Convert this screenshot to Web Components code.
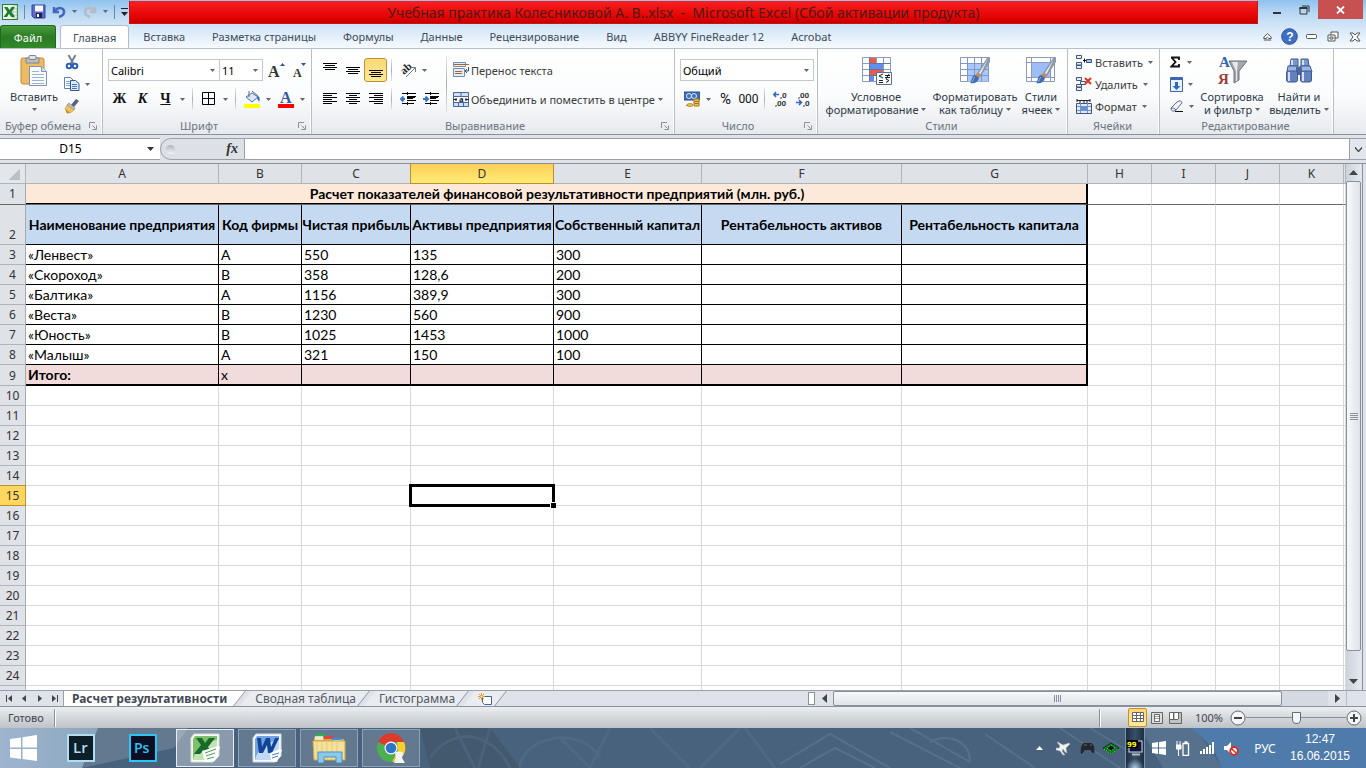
<!DOCTYPE html>
<html lang="ru">
<head>
<meta charset="utf-8">
<title>Учебная практика Колесниковой А. В..xlsx - Microsoft Excel</title>
<style>
html, body { margin: 0; height: 100%; }
body { font: 11px/13px "Noto Sans", "Open Sans", sans-serif; color: #3b3b3b; overflow: hidden; }
</style>
</head>
<body>
<xl-window></xl-window>
<script>
const RESET = `
*, *::before, *::after { box-sizing: border-box; }
button { font: inherit; color: inherit; background: none; border: 0; padding: 0; margin: 0; display: flex; align-items: center; justify-content: center; white-space: nowrap; }
input, select { font: inherit; color: inherit; border: 0; background: none; padding: 0; margin: 0; outline: 0; appearance: none; min-width: 0; }
`;
function define(name, css, html) {
  customElements.define(name, class extends HTMLElement {
    constructor() {
      super();
      this.attachShadow({ mode: 'open' });
    }
    connectedCallback() {
      if (this.shadowRoot.childNodes.length) return;
      const t = document.createElement('template');
      t.innerHTML = `<style>${RESET}${css}</style>${typeof html === 'function' ? html(this) : html}`;
      this.shadowRoot.append(t.content.cloneNode(true));
    }
  });
}

/* ---------- icons ---------- */
const lines = (rows, y0) => rows.map(([x, w], i) => `<path d="M${x} ${y0 + i * 2}.5h${w}" stroke="#000"/>`).join('');
const table4 = `<path fill="#fff" stroke="#8a9bbd" d="M.5.5h28v24H.5zM7.5.5v24M14.500.5v24M21.500.5v24M.5 6.500h28M.5 12.500h28M.5 18.500h28"/>`;
const brush = `<path d="M31 1l-3 1-10 15 4 3L31 6z" fill="#8d99a8"/><path d="M29 3l-9 14 1.500 1z" fill="#eef2f6"/><path d="M18 17l4 3-3 3-4-3z" fill="#c58a4c"/><path d="M16 19l4 3c-1 4-4 6-9 5 2-1 1-7 5-8z" fill="#3f6db3"/><path d="M16 21c-2 1-1 4-3 5" stroke="#8db4ea" fill="none"/>`;
const ICONS = {
  excel: [16, 16, `<rect x=".5" y=".5" width="15" height="15" fill="#e9f5e6" stroke="#2b7c3a"/><path d="M11 2h4v12h-4z" fill="#fff" stroke="#8cc08c" stroke-width=".7"/><path d="M11 5h4M11 8h4M11 11h4" stroke="#8cc08c"/><path d="M2 3h3.500l2 3 2-3H13L9.500 8l3.500 5H9.300L7 9.800 5 13H1.500L5.300 8z" fill="#1f7a33"/>`],
  save: [15, 15, `<path d="M1 1h13v13H3l-2-2z" fill="#5b6bc7" stroke="#3a4599"/><path d="M4 1.500h8v6H4z" fill="#f4f7ff"/><path d="M5 9h6v5H5z" fill="#1d2350"/><path d="M6 10h2v3H6z" fill="#fff"/>`],
  undo: [14, 16, `<path d="M2 3v5h5M3 7c3-4 9-4 9 1 0 3-2 4-5 5" fill="none" stroke="#3f67bd" stroke-width="2.500"/>`],
  redo: [14, 16, `<path d="M12 3v5H7M11 7C8 3 2 3 2 8c0 3 2 4 5 5" fill="none" stroke="#b5bac3" stroke-width="2.500"/>`],
  qat: [9, 10, `<path d="M1 1.500h7" stroke="#222"/><path d="M1 5h7L4.500 9z" fill="#222"/>`],
  arrow: [5, 3, `<path d="M0 0h5L2.500 3z" fill="#666"/>`],
  arrowb: [7, 4, `<path d="M0 0h7L3.500 4z" fill="#333"/>`],
  launcher: [8, 8, `<path d="M.5 6V.5H6M3.500 3.500l3 3M7.500 3.500v4h-4" fill="none" stroke="#8a8f98"/>`],
  paste: [28, 32, `<rect x="1" y="3" width="23" height="26" rx="2" fill="#eebb62" stroke="#c58a34"/><path d="M6 3h13v5H6z" fill="#b9bdc4" stroke="#7f858f"/><rect x="9" y=".5" width="7" height="4" rx="1" fill="#dfe2e6" stroke="#7f858f"/><path d="M9.500 11.500h12l5 5v14h-17z" fill="#f7fbff" stroke="#7d93b5"/><path d="M21.500 11.500v5h5" fill="#d5e2f3" stroke="#7d93b5"/><path d="M12 16.500h7M12 19.500h12M12 22.500h12M12 25.500h12M12 28.500h12" stroke="#9fb2d0"/>`],
  cut: [16, 16, `<path d="M4.500 1l5 9M11.500 1l-5 9" stroke="#6f7b8c" stroke-width="1.800"/><circle cx="5" cy="12" r="2.300" fill="none" stroke="#2f5fb4" stroke-width="2"/><circle cx="11" cy="12" r="2.300" fill="none" stroke="#2f5fb4" stroke-width="2"/>`],
  copy: [16, 16, `<path d="M.5 1.500h6l3 3v8h-9z" fill="#fff" stroke="#5d7fb8"/><path d="M2 5.500h5M2 7.500h5M2 9.500h5" stroke="#7ea0d6"/><path d="M6.500 4.500h5l3.500 3v7H6.500z" fill="#dce9fb" stroke="#2f5697"/><path d="M8 8.500h5M8 10.500h5M8 12.500h5" stroke="#4c79bd"/>`],
  painter: [16, 16, `<path d="M12 1l3 2-5 6-3-2z" fill="#59617a"/><path d="M5 5l6 5-1 2-7-5z" fill="#b8bec8" stroke="#7b828e" stroke-width=".6"/><path d="M3 7l7 5-4 3-5-4z" fill="#f2c457" stroke="#b98d2e" stroke-width=".6"/><path d="M1 11l5 4-3 .5z" fill="#c4831d"/>`],
  fontup: [18, 18, `<text x="1" y="16" font-family="Liberation Serif" font-weight="bold" font-size="16" fill="#333">A</text><path d="M13 5h5l-2.500-3z" fill="#2f5597"/>`],
  fontdn: [14, 18, `<text x="1" y="16" font-family="Liberation Serif" font-weight="bold" font-size="12" fill="#333">A</text><path d="M9 2h5l-2.500 3z" fill="#2f5597"/>`],
  border: [14, 14, `<path d="M.5.500h12v12H.5zM6.500.5v12M.5 6.500h12" fill="none" stroke="#000"/>`],
  fill: [18, 18, `<path d="M3 7l6-4 6 4-6 5z" fill="#dbe7f7" stroke="#4470ab"/><path d="M6 1v6M9 1l6 5" stroke="#5c6675" fill="none"/><path d="M15 6c2 1 2 4 1 6l-2-4z" fill="#2f5fb4"/><path d="M1 14h16v4H1z" fill="#ff0"/>`],
  color: [18, 18, `<text x="3" y="13" font-family="Liberation Serif" font-weight="bold" font-size="16" fill="#31579c">A</text><path d="M1 14h16v4H1z" fill="#f00"/>`],
  atop: [14, 16, lines([[0, 14], [2, 10], [0, 14], [2, 10]], 1)],
  amid: [14, 16, lines([[0, 14], [2, 10], [0, 14], [2, 10]], 5)],
  abot: [14, 16, lines([[0, 14], [2, 10], [0, 14], [2, 10]], 8)],
  left: [14, 14, lines([[0, 14], [0, 9], [0, 14], [0, 9], [0, 14], [0, 9]], 1)],
  center: [14, 14, lines([[0, 14], [3, 8], [0, 14], [3, 8], [0, 14], [3, 8]], 1)],
  right: [14, 14, lines([[0, 14], [5, 9], [0, 14], [5, 9], [0, 14], [5, 9]], 1)],
  orient: [18, 18, `<text transform="translate(5 14) rotate(-42)" x="0" y="0" font-family="Liberation Serif" font-weight="bold" font-size="11" fill="#222">ab</text><path d="M7 16l9-9M16.500 11V6.500H12" stroke="#777" fill="none"/>`],
  outdent: [16, 14, `<path d="M5 7H1M3.500 4.500L1 7l2.500 2.500" stroke="#3c74c8" stroke-width="2" fill="none"/><path d="M2 1.500h14M7 4.500h9M7 6.500h6M7 8.500h9M2 11.500h12" stroke="#000"/><path d="M7 5.500h8" stroke="#000"/><path d="M7.500 0v14" stroke="#000" stroke-dasharray="1 1"/>`],
  indent: [16, 14, `<path d="M0 7h5M2.500 4.500L5 7 2.500 9.500" stroke="#3c74c8" stroke-width="2" fill="none"/><path d="M2 1.500h14M7 4.500h9M7 6.500h6M7 8.500h9M2 11.500h12" stroke="#000"/><path d="M7 5.500h8" stroke="#000"/><path d="M7.500 0v14" stroke="#000" stroke-dasharray="1 1"/>`],
  wrap: [16, 16, `<path d="M.5.5h12v4H.5zM.5 6.500h11v8H.5z" fill="#e3edf9" stroke="#6f8cba"/><path d="M1 2.500h15" stroke="#b0622b"/><path d="M2 9.500h7M2 11.500h7" stroke="#b0622b"/><path d="M15.500 5v4h-3M14 7l-2 2 2 2" stroke="#2f4f86" fill="none"/>`],
  merge: [16, 15, `<path d="M.5.500h15v14H.5z" fill="#cfdff4" stroke="#48699f"/><path d="M1 4.500h14M1 10.500h14M8 1v3M5.500 11v3M10.500 11v3" stroke="#48699f"/><path d="M1 5h14v5H1z" fill="#fff"/><path d="M0 7.500h4M12 7.500h4M3 6v3M13 6v3" stroke="#223"/><text x="6" y="10" font-family="Liberation Serif" font-weight="bold" font-size="9" fill="#112">a</text>`],
  currency: [16, 16, `<path d="M0 1h16v8H0z" fill="#3e6fb8" stroke="#27508f"/><circle cx="5" cy="5" r="2.500" fill="none" stroke="#dce8fa"/><circle cx="10" cy="5" r="2.500" fill="none" stroke="#dce8fa"/><path d="M10 8h5v7h-5z" fill="#f0c24a" stroke="#a9781c"/><path d="M10 10.500h5M10 12.500h5M2 14.500h7" stroke="#a9781c"/><ellipse cx="6" cy="14" rx="3" ry="1.500" fill="#f0c24a" stroke="#a9781c" stroke-width=".7"/>`],
  incdec: [16, 16, `<path d="M6 3.500H1M3 1L.8 3.500 3 6" stroke="#2f66c0" stroke-width="1.500" fill="none"/><text x="7" y="7" font-family="Roboto" font-size="8" font-weight="bold" fill="#333">,0</text><text x="2" y="15" font-family="Roboto" font-size="8" font-weight="bold" fill="#333">,00</text>`],
  decdec: [16, 16, `<text x="2" y="7" font-family="Roboto" font-size="8" font-weight="bold" fill="#333">,00</text><path d="M0 11.500h5M3 9l2.500 2.500L3 14" stroke="#2f66c0" stroke-width="1.500" fill="none"/><text x="7" y="15" font-family="Roboto" font-size="8" font-weight="bold" fill="#333">,0</text>`],
  cond: [32, 32, `<g transform="translate(2 2)">${table4}<path d="M7 1h7v5H7zM7 13h14v5H7z" fill="#ec5a45"/><path d="M7 7h14v5H7zM7 19h5v5H7z" fill="#5f8ff0"/><path d="M7.500.5v24M7.500 6.500h21M7.500 12.500h14M7.500 18.500h14" stroke="#6274a0"/></g><path d="M16.500 17.500h15v12h-15z" fill="#f7f9fc" stroke="#5a6f92"/><path d="M23 19l-4 2 4 2M19 25.500h4M19 27.500h4M25 20.500h5M25 22.500h5M29 19l-3 5M26 24l3 1.500-3 2" stroke="#222" fill="none"/>`],
  fmttable: [32, 32, `<g transform="translate(1 2)">${table4}<path d="M7.500 6.500h21v18h-21z" fill="#a9c8fb"/><path d="M7.500.5v24M14.500.5v24M21.500.5v24M.5 6.500h28M.5 12.500h28M.5 18.500h28M28.500.5v24" stroke="#7f96c6"/></g><g transform="translate(0 1)">${brush}</g>`],
  cellstyle: [32, 32, `<g transform="translate(1 2)"><path fill="#fff" stroke="#8a9bbd" d="M.5.500h28v24H.5zM5.500.5v24M24.500.5v24M.5 5.500h28M.5 20.500h28"/><path d="M6 6h18v14H6z" fill="#9cbdf7"/></g><g transform="translate(0 1)">${brush}</g>`],
  cins: [16, 14, `<path d="M.5.500h5v3h-5zM.5 7.500h5v2.500h-5zM.5 10.500h5v3h-5z" fill="#e8f0fb" stroke="#40557d"/><path d="M7 5.500h4M8.500 3.500v4" stroke="#111"/><path d="M10.500 4.500h5v3h-5z" fill="#a9c6f2" stroke="#2f4f86"/>`],
  cdel: [16, 14, `<path d="M.5.500h5v3h-5zM.5 7.500h5v2.500h-5zM.5 10.500h5v3h-5zM4.500 4.500h5v3h-5z" fill="#e8f0fb" stroke="#40557d"/><path d="M9 1l6 6M15 1L9 7" stroke="#e1341e" stroke-width="2"/>`],
  cfmt: [16, 16, `<path d="M1 1v3M1 2.500h13M14 1v3M4 2v3M8 2v3M11 2v3" stroke="#223"/><path d="M.5 5.500h15v10H.5z" fill="#dfeafa" stroke="#40557d"/><path d="M4.500 5v10M11.500 5v10M1 8.500h14M1 12.500h14" stroke="#7591c0"/><path d="M5 9h6v3H5z" fill="#5c8fe6"/>`],
  sum: [12, 12, `<path d="M1 1.500h8v2.500M9 8v2.500H1.500L5.500 6 1.500 1.500" fill="none" stroke="#111" stroke-width="1.800"/>`],
  filldn: [13, 15, `<path d="M.5.5h12v14H.5z" fill="#e9f1fc" stroke="#3c66ad"/><path d="M1 1h11v2H1z" fill="#3c66ad"/><path d="M5 5h3v4h2.500l-4 4-4-4H5z" fill="#2d66c4"/>`],
  erase: [14, 13, `<path d="M1 8l6-6c3-2 5-1 5 1l-6 7c-3 2-5 1-5-2z" fill="#eef3fb" stroke="#5b6b87"/><path d="M1 8c1 0 4 0 5 2" stroke="#5b6b87" fill="none"/><path d="M5 11.500h8" stroke="#111"/>`],
  sort: [32, 32, `<text x="3" y="12" font-family="Liberation Serif" font-weight="bold" font-size="15" fill="#3465b4">A</text><text x="2" y="29" font-family="Liberation Serif" font-weight="bold" font-size="15" fill="#a23a35">Я</text><path d="M13 6h18l-8 10v9l-5 3V16z" fill="#a4a8ad" stroke="#6b7077"/><path d="M16 7h6l-1 9v10l-1 .5V16z" fill="#e6e8ea"/>`],
  find: [32, 32, `<path d="M8 4h7v7H7zM18 4h7l1 7h-8z" fill="#7d97cb" stroke="#3f5a92"/><path d="M5 11h10l1 6H4zM17 11h10l2 6H16z" fill="#9db5e2" stroke="#3f5a92"/><path d="M13 12h6v8h-6z" fill="#4c66a0"/><rect x="3.500" y="16" width="11" height="11" rx="2" fill="#6482bf" stroke="#3f5a92"/><rect x="17.500" y="16" width="11" height="11" rx="2" fill="#6482bf" stroke="#3f5a92"/><path d="M6 17v9M20 17v9M9 5v5M20 5v5" stroke="#d3e0f8" stroke-width="2"/>`],
  wmin: [10, 10, `<path d="M1 8h8" stroke="#333" stroke-width="2"/>`],
  wrest: [11, 10, `<path d="M1 3h7v6H1zM3 1h7v6" fill="none" stroke="#333"/><path d="M.5 3h8" stroke="#333" stroke-width="2"/>`],
  wclose: [9, 8, `<path d="M1 .5l7 7M8 .5l-7 7" stroke="#fff" stroke-width="1.800"/>`],
  caret: [9, 8, `<path d="M.8 4l3.700-3.300L8.200 4v1.500H6L4.500 4.200 3 5.500H.8zM.8 7h7.400" fill="#fff" stroke="#555"/>`],
  help: [17, 17, `<circle cx="8.500" cy="8.500" r="7.800" fill="#3d6fc4" stroke="#25509c"/><text x="5.200" y="13" font-family="Liberation Sans" font-weight="bold" font-size="12" fill="#fff">?</text>`],
  dmin: [11, 6, `<rect x=".5" y=".5" width="10" height="4" rx="1" fill="#fff" stroke="#555"/>`],
  drest: [12, 11, `<path d="M4 1h7v6H4z" fill="#fff" stroke="#555"/><path d="M1 4h7v6H1z" fill="#fff" stroke="#555"/><path d="M3 6h3v2H3z" fill="none" stroke="#555"/>`],
  dclose: [12, 10, `<path d="M1 1h3l2 2 2-2h3L8 5l3 4H8L6 7 4 9H1l3-4z" fill="#fff" stroke="#555"/>`],
  chev: [7, 6, `<path d="M0 1l3.500 4L7 1v1L3.500 6 0 2z" fill="#333" stroke="#444" stroke-width=".8"/>`],
  up: [9, 5, `<path d="M0 5h9L4.500 0z" fill="#444"/>`],
  down: [9, 5, `<path d="M0 0h9L4.500 5z" fill="#444"/>`],
  lt: [5, 9, `<path d="M5 0v9L0 4.500z" fill="#444"/>`],
  rt: [5, 9, `<path d="M0 0v9l5-4.500z" fill="#444"/>`],
  first: [7, 7, `<path d="M.5 0v7" stroke="#444"/><path d="M6 0v7L2 3.500z" fill="#444"/>`],
  prev: [7, 7, `<path d="M5 0v7L1 3.500z" fill="#444"/>`],
  next: [7, 7, `<path d="M2 0v7l4-3.500z" fill="#444"/>`],
  last: [7, 7, `<path d="M6.500 0v7" stroke="#444"/><path d="M1 0v7l4-3.500z" fill="#444"/>`],
  newsheet: [15, 12, `<path d="M4.500 3.500h9v8h-7l-2-2z" fill="#fff" stroke="#46639c"/><path d="M3.500 0v7M0 3.500h7M1 1l5 5M6 1L1 6" stroke="#e8962a"/><circle cx="3.500" cy="3.500" r="1" fill="#fff3b0"/>`],
  vnorm: [12, 11, `<path d="M.5.500h11v9H.5zM4.500.5v9M8.500.5v9M.5 3.500h11M.5 6.500h11" fill="#fff" stroke="#666"/>`],
  vpage: [12, 12, `<path d="M.5.500h11v11H.5z" fill="#ddd" stroke="#666"/><path d="M3.500 2.500h5v7h-5z" fill="#fff" stroke="#666"/><path d="M4 4.500h4M4 6.500h4" stroke="#999"/>`],
  vbreak: [13, 12, `<path d="M.5.500h12v11H.5z" fill="#bfc2c6" stroke="#666"/><path d="M1 1h3v6H1zM6 1h3v6H6z" fill="#fff"/><path d="M4.500 1v6M9.500 1v6M1 7.500h8" stroke="#666"/>`],
  minus: [16, 16, `<circle cx="8" cy="8" r="7" fill="#f4f5f6" stroke="#666b73"/><path d="M4 8h8" stroke="#444" stroke-width="2"/>`],
  plus: [16, 16, `<circle cx="8" cy="8" r="7" fill="#f4f5f6" stroke="#666b73"/><path d="M4 8h8M8 4v8" stroke="#444" stroke-width="2"/>`],
  win: [28, 26, `<path d="M0 4l11-1.500V12.500H0zM12.500 2.300L27 0v12.500H12.500zM0 14h11v10L0 22.500zM12.500 14H27v12l-14.500-2z" fill="#fff"/>`],
  lr: [28, 28, `<rect x="1" y="1" width="26" height="26" fill="#0d1f26" stroke="#b0dcf4" stroke-width="2"/><text x="6" y="19" font-family="Open Sans" font-weight="600" font-size="15" fill="#b0dcf4">Lr</text>`],
  ps: [28, 28, `<rect x="1" y="1" width="26" height="26" fill="#0c0f24" stroke="#2ac4f5" stroke-width="2"/><text x="5" y="19" font-family="Open Sans" font-weight="600" font-size="14" fill="#2ac4f5">Ps</text>`],
  xls: [30, 30, `<path d="M4 1h25v22l-6 6H1V5z" fill="#f7fcf5" stroke="#d5e4cf"/><path d="M5 3h22v19l-5 5H3V6z" fill="#7cc069"/><path d="M3 27C5 17 15 8 27 7v15l-5 5z" fill="#bfe3b5"/><path d="M6 5h6l3 5 4-5h6l-7 9 4 7h-6l-2-4-4 4H4l7-9z" fill="#176a2a"/><path d="M12 18l16-5 2 1-5 14-10 1z" fill="#fff"/><path d="M15 20l11-4M16 23l9-3M17 26l7-2" stroke="#4c9c50"/>`],
  doc: [30, 30, `<path d="M4 1h25v22l-6 6H1V5z" fill="#f5f9fe" stroke="#d0dcef"/><path d="M5 3h22v19l-5 5H3V6z" fill="#6fa3e2"/><path d="M3 27C5 17 15 8 27 7v15l-5 5z" fill="#c2d9f6"/><path d="M5 5h4l1 9 4-9h4l1 9 4-9h4l-7 15h-4l-1-8-4 8H7z" fill="#13449a"/><path d="M18 20l10-4 2 1-5 12-6-1z" fill="#fff"/><path d="M20 22l7-2M20 25l6-2" stroke="#4b7fc6"/>`],
  folder: [34, 30, `<path d="M2 4h10l2 2h18v21H2z" fill="#d8aa45"/><path d="M4 1h9v3H4z" fill="#27b34a"/><path d="M12 3h9v3h-9z" fill="#d44"/><path d="M20 5h9v3h-9z" fill="#3a8fe0"/><path d="M3 3h8v4H3zM21 7h8v3h-8z" fill="#fff" opacity=".7"/><path d="M1 8h32v19H2z" fill="#f4e19b" stroke="#cfa94b"/><path d="M5 9v17M10 9v17M15 9v17M20 9v17M25 9v17" stroke="#e6cb77"/><path d="M6 30V19h24v11h-6v-6H12v6z" fill="#8cc8ea" stroke="#4a93c4"/>`],
  chrome: [30, 30, `<circle cx="15" cy="15" r="14" fill="#4caf50"/><path d="M2 9A14 14 0 0 1 28 9H15l-4 4z" fill="#dc3a2c"/><path d="M28 9a14 14 0 0 1-12 20l6-11-1-9z" fill="#f9cf30"/><circle cx="15" cy="15" r="6.500" fill="#fff"/><circle cx="15" cy="15" r="5.300" fill="#2f74c8"/><path d="M19 20c0-2 8-2 8 0l-1 5 3 5H18l2-5z" fill="#f4f4f4"/>`],
  tup: [7, 4, `<path d="M0 4h7L3.500 0z" fill="#fff"/>`],
  plane: [15, 15, `<path d="M1 1c2 0 4 2 6 3l6-2 1 1-4 4 1 5-2-1-2-3-1 2 3 4-2 0-3-4-4-1 0-2 3 0L4 5z" fill="#f2f2f2" stroke="#aaa" stroke-width=".5"/>`],
  pad: [15, 14, `<path d="M1 13C0 8 2 2 4 2h7c3 1 4 6 3 10-2 1-3-3-4-3H5c-1 0-2 4-4 4z" fill="#23262b"/><path d="M4 4h3M10 4h2" stroke="#666"/>`],
  chip: [16, 13, `<path d="M8 1l8 5-8 6-8-6z" fill="#0b7a24" stroke="#083f12"/><path d="M1 7l7 5 7-5" stroke="#39e05a" stroke-dasharray="1.500 1" fill="none"/><path d="M8 3l4 3-4 3-4-3z" fill="#101510" stroke="#8dff9a" stroke-width=".8" stroke-dasharray="1 1"/>`],
  mon: [16, 16, `<rect x="2" y="1" width="13" height="11" fill="#0c1440" stroke="#ddd"/><path d="M0 0h11v8H0z" fill="#000"/><path d="M5 14.500h8" stroke="#bbb" stroke-width="2"/><text x="0" y="7" font-family="DejaVu Sans" font-weight="bold" font-size="7" fill="#ff0">99</text>`],
  twin: [14, 14, `<path d="M0 2l6-1v5.500H0zM7 1l7-1v6.500H7zM0 7.500h6V13l-6-1zM7 7.500h7V14l-7-1z" fill="#fff"/>`],
  batt: [14, 15, `<path d="M7 2.500h5.500v12H7zM8.500 1h3" fill="none" stroke="#fff" stroke-width="1.300"/><path d="M1 0v4M4 0v4M0 4h5v4H0zM2.500 8v7" stroke="#fff" fill="#fff"/>`],
  sig: [15, 12, `<path d="M0 9h2v3H0zM3 7h2v5H3zM6 5h2v7H6zM9 3h2v9H9zM12 0h2v12h-2z" fill="#fff"/>`],
  vol: [15, 15, `<path d="M0 5h3l4-4v12L3 9H0z" fill="#fff"/><circle cx="10" cy="10" r="3.800" fill="#fff" stroke="#e2231a" stroke-width="1.800"/><path d="M7.500 7.500l5 5" stroke="#e2231a" stroke-width="1.500"/>`]
};
define('xl-icon', `:host { display: inline-flex; flex: none; } svg { display: block; }`, el => {
  const [w, h, body] = ICONS[el.getAttribute('name')];
  return `<svg width="${w}" height="${h}" viewBox="0 0 ${w} ${h}" aria-hidden="true">${body}</svg>`;
});

/* ---------- title bar ---------- */
define('xl-titlebar', `
:host { display: flex; height: 25px; align-items: flex-start; }
.qat { display: flex; align-items: center; height: 23px; width: 129px; padding-left: 2px; gap: 6px; flex: none; }
.qat i { width: 1px; height: 14px; background: #6d87a3; }
h1 { flex: 1; margin: 1px 0 0; height: 23px; font: 14px/23px "Noto Sans", sans-serif; text-align: center; color: #4f1a18; background: linear-gradient(#fb2020, #e00000 80%, #c00000); border: 1px solid #cf1010; border-top: 0; white-space: pre; overflow: hidden; padding-right: 20px; }
.win { display: flex; width: 108px; flex: none; }
.win button { height: 19px; width: 27px; }
.win .min { margin-left: 5px; width: 28px; }
.win .x { width: 45px; background: #c75050; }
`, `
<div class="qat"><xl-icon name="excel"></xl-icon><i></i><button aria-label="Сохранить"><xl-icon name="save"></xl-icon></button><button aria-label="Отменить"><xl-icon name="undo"></xl-icon></button><xl-icon name="arrow"></xl-icon><button aria-label="Вернуть"><xl-icon name="redo"></xl-icon></button><xl-icon name="arrow"></xl-icon><i></i><xl-icon name="qat"></xl-icon></div>
<h1>Учебная практика Колесниковой А. В..xlsx  -  Microsoft Excel (Сбой активации продукта)</h1>
<div class="win"><button class="min" aria-label="Свернуть"><xl-icon name="wmin"></xl-icon></button><button aria-label="Восстановить"><xl-icon name="wrest"></xl-icon></button><button class="x" aria-label="Закрыть"><xl-icon name="wclose"></xl-icon></button></div>`);

/* ---------- ribbon tabs ---------- */
define('xl-tabs', `
:host { display: flex; height: 23px; }
nav { display: flex; flex: 1; }
button { height: 23px; padding: 0 13px 0 14px; color: #414b58; }
.file { background: linear-gradient(#4a9b3c, #2a7a24 50%, #318a2a); color: #fff; width: 56px; border-radius: 3px 3px 0 0; border: 1px solid #1f6a1c; border-bottom: 0; padding: 0; margin-right: 4px; }
.on { background: #fff; border: 1px solid #b3bcc8; border-bottom: 0; border-radius: 3px 3px 0 0; padding: 0 12px; }
.right { display: flex; align-items: center; }
.right button { padding: 0; width: 22px; }
`, `
<nav><button class="file">Файл</button><button class="on">Главная</button><button>Вставка</button><button>Разметка страницы</button><button>Формулы</button><button>Данные</button><button>Рецензирование</button><button>Вид</button><button>ABBYY FineReader 12</button><button>Acrobat</button></nav>
<div class="right"><button aria-label="Свернуть ленту"><xl-icon name="caret"></xl-icon></button><button aria-label="Справка"><xl-icon name="help"></xl-icon></button><button aria-label="Свернуть окно"><xl-icon name="dmin"></xl-icon></button><button aria-label="Восстановить окно"><xl-icon name="drest"></xl-icon></button><button aria-label="Закрыть окно"><xl-icon name="dclose"></xl-icon></button></div>`);

/* ---------- ribbon parts ---------- */
define('xl-group', `
:host { display: flex; flex-direction: column; height: 86px; flex: none; border-right: 1px solid #b9bec6; box-shadow: inset -1px 0 #fff; }
.body { flex: 1; display: flex; min-height: 0; }
footer { display: flex; height: 17px; align-items: center; color: #6b7480; padding-right: 2px; }
footer span { flex: 1; text-align: center; }
footer button { width: 14px; height: 14px; }
`, el => `<div class="body"><slot></slot></div><footer><span>${el.getAttribute('label')}</span>${el.hasAttribute('plain') ? '' : `<button aria-label="${el.getAttribute('label')}: параметры"><xl-icon name="launcher"></xl-icon></button>`}</footer>`);

define('xl-tool', `
:host { display: block; flex: none; height: 24px; width: 23px; }
:host([menu]) { width: 34px; }
:host([wide]) { width: auto; }
button { width: 100%; height: 100%; justify-content: flex-start; border-radius: 3px; }
.i { width: 23px; display: flex; justify-content: center; font: bold 14px/20px "Liberation Serif", serif; color: #111; }
:host([on]) button { background: linear-gradient(#fbd877, #fde994); border: 1px solid #c29135; }
:host([on]) .i { width: 21px; }
:host([menu]) .m { width: 11px; display: flex; justify-content: center; }
:host([wide]) .i { width: 18px; justify-content: flex-start; }
`, el => `<button aria-label="${el.getAttribute('hint') || ''}"><span class="i">${el.getAttribute('icon') ? `<xl-icon name="${el.getAttribute('icon')}"></xl-icon>` : '<slot name="glyph"></slot>'}</span><slot></slot>${el.hasAttribute('menu') ? '<span class="m"><xl-icon name="arrow"></xl-icon></span>' : ''}</button>`);

define('xl-row-button', `
:host { display: block; height: 22px; }
button { height: 22px; gap: 3px; }
xl-icon.a { margin-left: 2px; }
`, el => `<button aria-label="${el.getAttribute('hint') || el.textContent}"><xl-icon name="${el.getAttribute('icon')}"></xl-icon><slot></slot>${el.hasAttribute('menu') ? '<xl-icon class="a" name="arrow"></xl-icon>' : ''}</button>`);

define('xl-big', `
:host { display: block; flex: none; padding-top: 6px; }
button { flex-direction: column; width: 100%; color: #2f3a48; }
.i { height: 32px; margin-bottom: 3px; display: flex; align-items: center; }
.l { height: 13px; display: flex; align-items: center; gap: 3px; }
`, el => `<button><span class="i"><xl-icon name="${el.getAttribute('icon')}"></xl-icon></span><span class="l">${el.getAttribute('top')}</span><span class="l">${el.getAttribute('bottom') || ''}<xl-icon name="arrow"></xl-icon></span></button>`);

define('xl-sep', `:host { display: block; width: 9px; height: 22px; flex: none; background: linear-gradient(#e3e6ea, #a7aeb8, #e3e6ea) center / 1px 100% no-repeat; }`, '');

define('xl-combo', `
:host { display: flex; position: relative; height: 22px; border: 1px solid #c3c7ce; background: #fff; align-items: center; }
select { width: 100%; height: 20px; padding-left: 2px; color: #000; font-size: 11px; }
xl-icon { position: absolute; right: 4px; pointer-events: none; }
`, el => `<select aria-label="${el.getAttribute('hint')}"><option>${el.getAttribute('value')}</option></select><xl-icon name="arrow"></xl-icon>`);

define('xl-ribbon', `
:host { display: flex; height: 87px; background: linear-gradient(#fff, #fbfcfd 55%, #e6e9ed); border-top: 1px solid #b7c0cc; border-bottom: 1px solid #8b9097; }
.rows { display: flex; flex-direction: column; gap: 5px; padding: 9px 0 0; }
.row { display: flex; height: 24px; align-items: center; }
.three { display: flex; flex-direction: column; padding-top: 2px; }
xl-group { height: 85px; }
.clip { width: 103px; } .font { width: 209px; } .align { width: 363px; } .num { width: 143px; } .style { width: 250px; } .cells { width: 92px; } .edit { width: 174px; }
.font .rows { padding-left: 5px; }
.align .rows { padding-left: 6px; }
.num .rows { padding-left: 5px; }
.font xl-combo { width: 112px; } .font xl-combo + xl-combo { width: 43px; border-left: 0; margin-right: 1px; }
.num xl-combo { width: 134px; }
.align .tall { height: 56px; margin-top: 7px; width: 9px; }
.align .rows.texts { padding-left: 2px; }
.clip xl-big { width: 64px; padding-left: 4px; }
xl-big.b1 { width: 116px; } xl-big.b2 { width: 82px; } xl-big.b3 { width: 50px; }
.cells .three { padding-left: 8px; }
.edit .three { padding-left: 10px; width: 34px; }
.edit .b4 { width: 76px; } .edit .b5 { width: 58px; }
.pc { font: 15px/20px Roboto, sans-serif; } .th { font: 12px/20px Roboto, sans-serif; }
`, `
<xl-group class="clip" label="Буфер обмена"><xl-big icon="paste" top="Вставить"></xl-big><div class="three"><xl-row-button icon="cut" hint="Вырезать"></xl-row-button><xl-row-button icon="copy" menu hint="Копировать"></xl-row-button><xl-row-button icon="painter" hint="Формат по образцу"></xl-row-button></div></xl-group>
<xl-group class="font" label="Шрифт"><div class="rows">
 <div class="row"><xl-combo value="Calibri" hint="Шрифт"></xl-combo><xl-combo value="11" hint="Размер"></xl-combo><xl-tool icon="fontup" hint="Увеличить размер"></xl-tool><xl-tool icon="fontdn" hint="Уменьшить размер"></xl-tool></div>
 <div class="row"><xl-tool hint="Полужирный"><b slot="glyph">Ж</b></xl-tool><xl-tool hint="Курсив"><i slot="glyph">К</i></xl-tool><xl-tool menu hint="Подчеркнутый"><u slot="glyph">Ч</u></xl-tool><xl-sep></xl-sep><xl-tool icon="border" menu hint="Границы"></xl-tool><xl-sep></xl-sep><xl-tool icon="fill" menu hint="Цвет заливки"></xl-tool><xl-tool icon="color" menu hint="Цвет текста"></xl-tool></div>
</div></xl-group>
<xl-group class="align" label="Выравнивание"><div class="rows">
 <div class="row"><xl-tool icon="atop" hint="По верхнему краю"></xl-tool><xl-tool icon="amid" hint="Посередине"></xl-tool><xl-tool icon="abot" on hint="По нижнему краю"></xl-tool><xl-sep></xl-sep><xl-tool icon="orient" menu hint="Ориентация"></xl-tool></div>
 <div class="row"><xl-tool icon="left" hint="По левому краю"></xl-tool><xl-tool icon="center" hint="По центру"></xl-tool><xl-tool icon="right" hint="По правому краю"></xl-tool><xl-sep></xl-sep><xl-tool icon="outdent" hint="Уменьшить отступ"></xl-tool><xl-tool icon="indent" hint="Увеличить отступ"></xl-tool></div>
</div><xl-sep class="tall"></xl-sep><div class="rows texts">
 <div class="row"><xl-tool wide icon="wrap" hint="Перенос текста">Перенос текста</xl-tool></div>
 <div class="row"><xl-tool wide menu icon="merge" hint="Объединить и поместить в центре">Объединить и поместить в центре</xl-tool></div>
</div></xl-group>
<xl-group class="num" label="Число"><div class="rows">
 <div class="row"><xl-combo value="Общий" hint="Числовой формат"></xl-combo></div>
 <div class="row"><xl-tool icon="currency" menu hint="Финансовый формат"></xl-tool><xl-tool hint="Процентный формат"><span slot="glyph" class="pc">%</span></xl-tool><xl-tool hint="Формат с разделителями"><span slot="glyph" class="th">000</span></xl-tool><xl-sep></xl-sep><xl-tool icon="incdec" hint="Увеличить разрядность"></xl-tool><xl-tool icon="decdec" hint="Уменьшить разрядность"></xl-tool></div>
</div></xl-group>
<xl-group class="style" label="Стили" plain><xl-big class="b1" icon="cond" top="Условное" bottom="форматирование"></xl-big><xl-big class="b2" icon="fmttable" top="Форматировать" bottom="как таблицу"></xl-big><xl-big class="b3" icon="cellstyle" top="Стили" bottom="ячеек"></xl-big></xl-group>
<xl-group class="cells" label="Ячейки" plain><div class="three"><xl-row-button icon="cins" menu>Вставить</xl-row-button><xl-row-button icon="cdel" menu>Удалить</xl-row-button><xl-row-button icon="cfmt" menu>Формат</xl-row-button></div></xl-group>
<xl-group class="edit" label="Редактирование" plain><div class="three"><xl-row-button icon="sum" menu hint="Сумма"></xl-row-button><xl-row-button icon="filldn" menu hint="Заполнить"></xl-row-button><xl-row-button icon="erase" menu hint="Очистить"></xl-row-button></div><xl-big class="b4" icon="sort" top="Сортировка" bottom="и фильтр"></xl-big><xl-big class="b5" icon="find" top="Найти и" bottom="выделить"></xl-big></xl-group>`);

/* ---------- formula bar ---------- */
define('xl-formula', `
:host { display: flex; height: 29px; padding: 3px 0 4px; background: #dfe2e9; border-bottom: 1px solid #8b919b; }
:host > * { border-top: 1px solid #9aa0aa; border-bottom: 1px solid #9aa0aa; height: 22px; }
.name { display: flex; align-items: center; width: 160px; background: #fff; }
.name input { flex: 1; text-align: center; font: 12px/16px "Noto Sans", sans-serif; color: #000; padding-right: 6px; }
.name xl-icon { margin-right: 6px; }
.fx { width: 85px; background: #dde1e6; border-left: 1px solid #9aa0aa; border-right: 1px solid #9aa0aa; border-radius: 11px 0 0 11px; display: flex; justify-content: space-between; align-items: center; padding: 0 6px 0 5px; }
.fx i { width: 9px; height: 9px; border-radius: 5px; background: linear-gradient(#aeb4bb, #f2f4f6); }
.fx button { font: italic bold 14px/18px "Liberation Serif", serif; color: #333; }
.text { flex: 1; background: #fff; padding: 0 4px; color: #000; }
.exp { width: 17px; background: #e3e6ea; border-left: 1px solid #9aa0aa; }
`, `<div class="name"><input value="D15" aria-label="Поле имени"><xl-icon name="arrowb"></xl-icon></div><div class="fx"><i></i><button aria-label="Вставить функцию">fx</button></div><input class="text" aria-label="Строка формул"><button class="exp" aria-label="Развернуть"><xl-icon name="chev"></xl-icon></button>`);

/* ---------- worksheet ---------- */
const HEAD = ['Наименование предприятия', 'Код фирмы', 'Чистая прибыль', 'Активы предприятия', 'Собственный капитал', 'Рентабельность активов', 'Рентабельность капитала'];
const DATA = [
  ['«Ленвест»', 'А', '550', '135', '300'], ['«Скороход»', 'В', '358', '128,6', '200'], ['«Балтика»', 'А', '1156', '389,9', '300'],
  ['«Веста»', 'В', '1230', '560', '900'], ['«Юность»', 'В', '1025', '1453', '1000'], ['«Малыш»', 'А', '321', '150', '100']];
const rest = '<td></td>'.repeat(5);
const cells = (row, cls) => Array.from({ length: 7 }, (_, i) => `<td class="${cls}${i === 6 ? ' edge' : ''}">${row[i] || ''}</td>`).join('') + rest;
function sheetRows() {
  let s = `<tr class="r1"><th scope="row">1</th><td colspan="7" class="title edge">Расчет показателей финансовой результативности предприятий (млн. руб.)</td>${rest}</tr>`;
  s += `<tr class="r2"><th scope="row">2</th>${cells(HEAD, 'hd')}</tr>`;
  DATA.forEach((r, i) => { s += `<tr><th scope="row">${i + 3}</th>${cells(r, 'b')}</tr>`; });
  s += `<tr class="r9"><th scope="row">9</th>${cells(['<b>Итого:</b>', 'х'], 'b tot')}</tr>`;
  for (let n = 10; n <= 25; n++) {
    s += `<tr><th scope="row"${n === 15 ? ' class="cur"' : ''}>${n < 25 ? n : ''}</th>` + Array.from({ length: 12 }, (_, i) => n === 15 && i === 3 ? '<td class="sel"></td>' : '<td></td>').join('') + '</tr>';
  }
  return s;
}
define('xl-sheet', `
:host { display: block; flex: 1; min-width: 0; height: 100%; overflow: hidden; background: #fff; }
table { table-layout: fixed; border-collapse: separate; border-spacing: 0; width: 100%; font: 14px/18px Lato, "Noto Sans", sans-serif; color: #000; }
th, td { padding: 0; height: 20px; border-right: 1px solid #d8d9db; border-bottom: 1px solid #d8d9db; white-space: nowrap; }
td { padding-left: 2px; vertical-align: bottom; }
th { font: 12px/18px "Noto Sans", sans-serif; text-align: center; color: #333; background: #dfe2e7; border-color: #b1b5ba; }
thead th.cur { background: linear-gradient(#fdcf58, #ffec74); border-color: #c38c30; box-shadow: -1px 0 #c38c30; }
tbody th { border-right-color: #a5aab1; vertical-align: bottom; }
tbody th.cur { background: #ffd75e; border-color: #c38c30; box-shadow: 0 -1px #c38c30; }
.corner { background: linear-gradient(135deg, transparent 50%, #bcc0c5 50%) 9px 5px / 11px 11px no-repeat, #e3e6ea; }
.r1 > * { height: 21px; border-bottom-color: #666; padding-bottom: 1px; }
.title { background: #fde9d9; font-weight: bold; text-align: center; box-shadow: inset 0 -1px #000; }
.hd { background: #c5d9f1; font-weight: bold; text-align: center; vertical-align: middle; padding: 0; }
.r2 > * { height: 40px; }
.b, .hd { border-color: #000; }
.edge { border-right: 2px solid #000; }
.r9 > * { height: 21px; }
.r9 .tot { background: #f2dcdb; border-bottom: 2px solid #000; }
.sel { position: relative; }
.sel::before { content: ""; position: absolute; inset: -2px; border: 3px solid #000; }
.sel::after { content: ""; position: absolute; right: -3px; bottom: -3px; width: 6px; height: 6px; background: #000; border: 1px solid #fff; border-width: 1px 0 0 1px; }
`, () => `<table><colgroup>${[26, 193, 83, 109, 143, 148, 200, 186, 64, 64, 64, 64].map(w => `<col style="width:${w}px">`).join('')}<col></colgroup>
<thead><tr><th class="corner"></th>${'ABCDEFGHIJK'.split('').map(c => `<th scope="col"${c === 'D' ? ' class="cur"' : ''}>${c}</th>`).join('')}<th></th></tr></thead><tbody>${sheetRows()}</tbody></table>`);

define('xl-vscroll', `
:host { display: flex; flex-direction: column; width: 20px; flex: none; background: linear-gradient(90deg, #ccd3dc, #e4e8ee 15px, #dfe2e9 15px 16px, #8b919b 16px 17px, #dfe2e9 17px); }
button { width: 15px; height: 17px; flex: none; }
.track { flex: 1; display: flex; flex-direction: column; padding-bottom: 22px; }
.thumb { flex: 1; width: 15px; border: 1px solid #8b919b; border-radius: 2px; background: linear-gradient(90deg, #f7f8fa, #dfe3e9); display: flex; align-items: center; justify-content: center; }
.thumb i { width: 8px; height: 7px; background: repeating-linear-gradient(#8b919b 0 1px, transparent 1px 2px); }
`, `<button aria-label="Вверх"><xl-icon name="up"></xl-icon></button><div class="track"><div class="thumb"><i></i></div></div><button aria-label="Вниз"><xl-icon name="down"></xl-icon></button>`);

/* ---------- sheet tabs and horizontal scroll ---------- */
define('xl-sheettabs', `
:host { display: flex; height: 17px; background: #dfe2e9; border-top: 1px solid #9aa0aa; border-bottom: 1px solid #8b919b; font-size: 12px; line-height: 15px; }
.nav { display: flex; width: 64px; padding-left: 2px; flex: none; border-right: 1px solid #9aa0aa; } .nav button { width: 15px; height: 15px; }
.tabs { flex: 1; display: flex; overflow: hidden; }
.tabs button { position: relative; isolation: isolate; height: 15px; color: #55595f; padding: 0 11px 0 12px; }
.tabs button::before { content: ""; position: absolute; z-index: -1; inset: 0 3px; transform: skewX(-38deg); background: #e9ecf1; border-right: 1px solid #8b919b; }
.tabs .on { font-weight: bold; color: #444a55; padding: 0 16px 0 8px; background: linear-gradient(90deg, #fff 90%, transparent 90%); }
.tabs .on::before { background: #fff; }
.h { display: flex; width: 558px; align-items: center; flex: none; }
.split { width: 7px; height: 13px; border: 1px solid #8b919b; background: #fff; }
.h button { width: 18px; height: 15px; }
.track { flex: 1; height: 15px; background: #d5dae2; padding-right: 46px; }
.thumb { height: 15px; border: 1px solid #8b919b; border-radius: 2px; background: linear-gradient(#f7f8fa, #dfe3e9); display: flex; align-items: center; justify-content: center; }
.thumb i { width: 7px; height: 7px; background: repeating-linear-gradient(90deg, #8b919b 0 1px, transparent 1px 2px); }
.end { width: 20px; height: 15px; border-left: 1px solid #b9bec6; }
`, `
<div class="nav"><button aria-label="Первый лист"><xl-icon name="first"></xl-icon></button><button aria-label="Предыдущий лист"><xl-icon name="prev"></xl-icon></button><button aria-label="Следующий лист"><xl-icon name="next"></xl-icon></button><button aria-label="Последний лист"><xl-icon name="last"></xl-icon></button></div>
<div class="tabs"><button class="on">Расчет результативности</button><button>Сводная таблица</button><button>Гистограмма</button><button aria-label="Вставить лист"><xl-icon name="newsheet"></xl-icon></button></div>
<div class="h"><span class="split"></span><button aria-label="Влево"><xl-icon name="lt"></xl-icon></button><div class="track"><div class="thumb"><i></i></div></div><button aria-label="Вправо"><xl-icon name="rt"></xl-icon></button><span class="end"></span></div>`);

/* ---------- status bar ---------- */
define('xl-status', `
:host { display: flex; height: 21px; align-items: center; background: linear-gradient(#eceef0, #d0d3d7 60%, #bfc3c8); padding: 0 4px 0 8px; color: #3f4751; }
.s { width: 1px; height: 18px; background: #8b919b; box-shadow: 1px 0 #fff; }
.state { width: 46px; }
.grow { flex: 1; }
.view { width: 19px; height: 19px; } .view.on { background: linear-gradient(#fbd877, #fde994); border: 1px solid #c29135; border-radius: 2px; }
.pct { width: 38px; text-align: center; margin: 0 2px 0 5px; }
input { width: 100px; height: 16px; background: linear-gradient(#8b919b, #8b919b) center / 100% 1px no-repeat; }
input::-webkit-slider-thumb { appearance: none; width: 9px; height: 12px; background: #f5f6f7; border: 1px solid #666b73; border-radius: 1px 1px 5px 5px; }
.first { margin-left: 28px; }
`, `<span class="state">Готово</span><span class="s"></span><span class="grow"></span><span class="s"></span><button class="view on first" aria-label="Обычный"><xl-icon name="vnorm"></xl-icon></button><button class="view" aria-label="Разметка страницы"><xl-icon name="vpage"></xl-icon></button><button class="view" aria-label="Страничный режим"><xl-icon name="vbreak"></xl-icon></button><span class="pct">100%</span><button aria-label="Уменьшить"><xl-icon name="minus"></xl-icon></button><input type="range" aria-label="Масштаб" min="0" max="100" value="50"><button aria-label="Увеличить"><xl-icon name="plus"></xl-icon></button>`);

/* ---------- taskbar ---------- */
define('win-taskbar', `
:host { display: flex; position: relative; isolation: isolate; height: 40px; align-items: center; color: #fff; background: #48627d; overflow: hidden; }
.bg { position: absolute; inset: 0; z-index: -1; width: 100%; height: 100%; }
.apps { display: flex; gap: 4px; flex: 1; }
.apps button { width: 58px; height: 38px; }
.apps .start { width: 48px; }
.apps .run { border: 1px solid #8fa3b8; background: #ffffff26; }
.apps .act { border-color: #e6edf4; background: #ffffff5c; }
.tray { display: flex; align-items: center; }
.tray button { width: 24px; height: 40px; }
.tray .lit { width: 20px; margin: 0 2px; background: radial-gradient(circle at 50% 100%, #a9c8e8, transparent 9px), linear-gradient(90deg, #7f93a8 1px, #1c2f42 1px, #3a5068 50%, #1c2f42 19px, #7f93a8 19px); }
.lang { width: 44px; text-align: center; font-size: 12px; }
.clock { width: 66px; margin-right: 13px; text-align: center; font: 12px/17px "Liberation Sans", "Noto Sans", sans-serif; }
.clock span { display: block; }
`, `
<svg class="bg" viewBox="0 0 1366 40" preserveAspectRatio="none" aria-hidden="true">
<defs><linearGradient id="g"><stop offset="0" stop-color="#9db5ce"/><stop offset="1" stop-color="#8ca5bf"/></linearGradient></defs>
<path d="M0 0h100L82 40H0z" fill="url(#g)"/><path d="M98 0h90l-14 20-92 20z" fill="#63798f"/>
<path d="M420 0h70l30 40h-90z" fill="#42596e"/><path d="M430 30c20-30 60-30 80 10M520 40c0-30 60-45 80-10M455 0l20 40M490 0l-12 40M560 10l30 30M610 0l-20 40M650 0l40 40M700 40l40-40M745 0l30 40" stroke="#5f7c97" fill="none" stroke-width="3" opacity=".3"/>
<path d="M780 36l50-30 60 34M800 40l35-20 40 20M890 4l70 36M910 0l60 34M930 14c20-10 40 0 40 20M985 6l50 34M1060 0l60 40M1090 0l50 30" stroke="#7891aa" fill="none" stroke-width="2" opacity=".3"/>
<path d="M1140 0h55l28 40h-60z" fill="#56718d"/><path d="M1190 0h176v40H1222c-6-16-16-30-32-40z" fill="#4f7bab"/></svg>
<div class="apps"><button class="start" aria-label="Пуск"><xl-icon name="win"></xl-icon></button><button aria-label="Lightroom"><xl-icon name="lr"></xl-icon></button><button aria-label="Photoshop"><xl-icon name="ps"></xl-icon></button><button class="run act" aria-label="Excel"><xl-icon name="xls"></xl-icon></button><button class="run" aria-label="Word"><xl-icon name="doc"></xl-icon></button><button class="run" aria-label="Проводник"><xl-icon name="folder"></xl-icon></button><button class="run" aria-label="Chrome"><xl-icon name="chrome"></xl-icon></button></div>
<div class="tray"><button aria-label="Скрытые значки"><xl-icon name="tup"></xl-icon></button><button aria-label="Самолёт"><xl-icon name="plane"></xl-icon></button><button aria-label="Геймпад"><xl-icon name="pad"></xl-icon></button><button aria-label="Чип"><xl-icon name="chip"></xl-icon></button><button class="lit" aria-label="Монитор"><xl-icon name="mon"></xl-icon></button><button aria-label="Windows"><xl-icon name="twin"></xl-icon></button><button aria-label="Питание"><xl-icon name="batt"></xl-icon></button><button aria-label="Сеть"><xl-icon name="sig"></xl-icon></button><button aria-label="Звук"><xl-icon name="vol"></xl-icon></button></div>
<span class="lang">РУС</span><div class="clock"><span>12:47</span><span>16.06.2015</span></div>`);

define('xl-window', `
:host { display: flex; flex-direction: column; height: 100vh; min-height: 400px; }
.chrome { background: linear-gradient(#8fc2f0, #b5d6f3 12px, #d2e5f7 26px, #f6faff); }
main { flex: 1; display: flex; min-height: 0; }
`, `<div class="chrome"><xl-titlebar></xl-titlebar><xl-tabs></xl-tabs></div><xl-ribbon></xl-ribbon><xl-formula></xl-formula><main><xl-sheet></xl-sheet><xl-vscroll></xl-vscroll></main><xl-sheettabs></xl-sheettabs><xl-status></xl-status><win-taskbar></win-taskbar>`);
</script>
</body>
</html>
